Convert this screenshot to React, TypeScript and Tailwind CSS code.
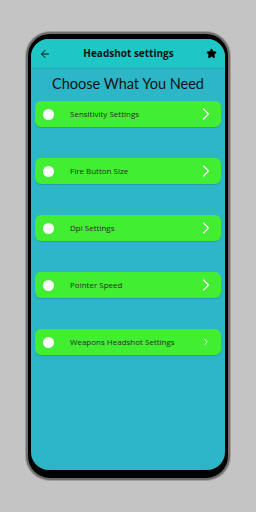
import { ArrowLeft, Star, ChevronRight } from "lucide-react";

const items = [
  { label: "Sensitivity Settings", small: false },
  { label: "Fire Button Size", small: false },
  { label: "Dpi Settings", small: false },
  { label: "Pointer Speed", small: false },
  { label: "Weapons Headshot Settings", small: true },
];

export default function App() {
  return (
    <div className="w-[256px] h-[512px] bg-[#c4c4c4] overflow-hidden pt-[32px] pl-[26px]" style={{ fontFamily: '"Open Sans", "Noto Sans", sans-serif' }}>
      {/* Phone frame */}
      <div className="w-[204px] h-[448px] rounded-[24px] border-2 border-[#6e6e6e] bg-black pt-[5px] pl-[3px] pr-[3px] pb-[8px] shadow-[0_0_0_1px_#a0a0a0]">
        <div className="h-full rounded-[18px] overflow-hidden bg-[#2db6c8] flex flex-col">
          {/* Header */}
          <div className="h-[30px] flex-shrink-0 bg-[#1fc6c6] border-b border-[#27a9b8] flex items-center justify-between px-[8px]">
            <ArrowLeft size={12} strokeWidth={1.8} className="text-black" />
            <span className="text-[10px] font-bold text-[#111]">Headshot settings</span>
            <Star size={11} fill="black" className="text-black" />
          </div>

          {/* Title */}
          <h1 className="text-center text-[14.5px] leading-[20px] text-[#111] mt-[5px]" style={{ fontFamily: 'Lato, "Open Sans", sans-serif' }}>
            Choose What You Need
          </h1>

          {/* Options */}
          <div className="flex flex-col gap-[31px] mt-[7px] px-[4px]">
            {items.map((item) => (
              <div key={item.label}
                className="h-[26px] bg-[#42ee32] rounded-[6px] flex items-center pl-[8px] pr-[5px] shadow-[0_1px_1px_rgba(0,0,0,0.15)]">
                <span className="w-[11px] h-[11px] rounded-full bg-white flex-shrink-0" />
                <span className="ml-[16px] text-[8px] text-[#2a2a2a] flex-1">{item.label}</span>
                {item.small ? (
                  <ChevronRight size={10} strokeWidth={2.2} className="text-white mr-[5px]" />
                ) : (
                  <ChevronRight size={20} strokeWidth={1.5} className="text-white" />
                )}
              </div>
            ))}
          </div>
        </div>
      </div>
    </div>
  );
}
